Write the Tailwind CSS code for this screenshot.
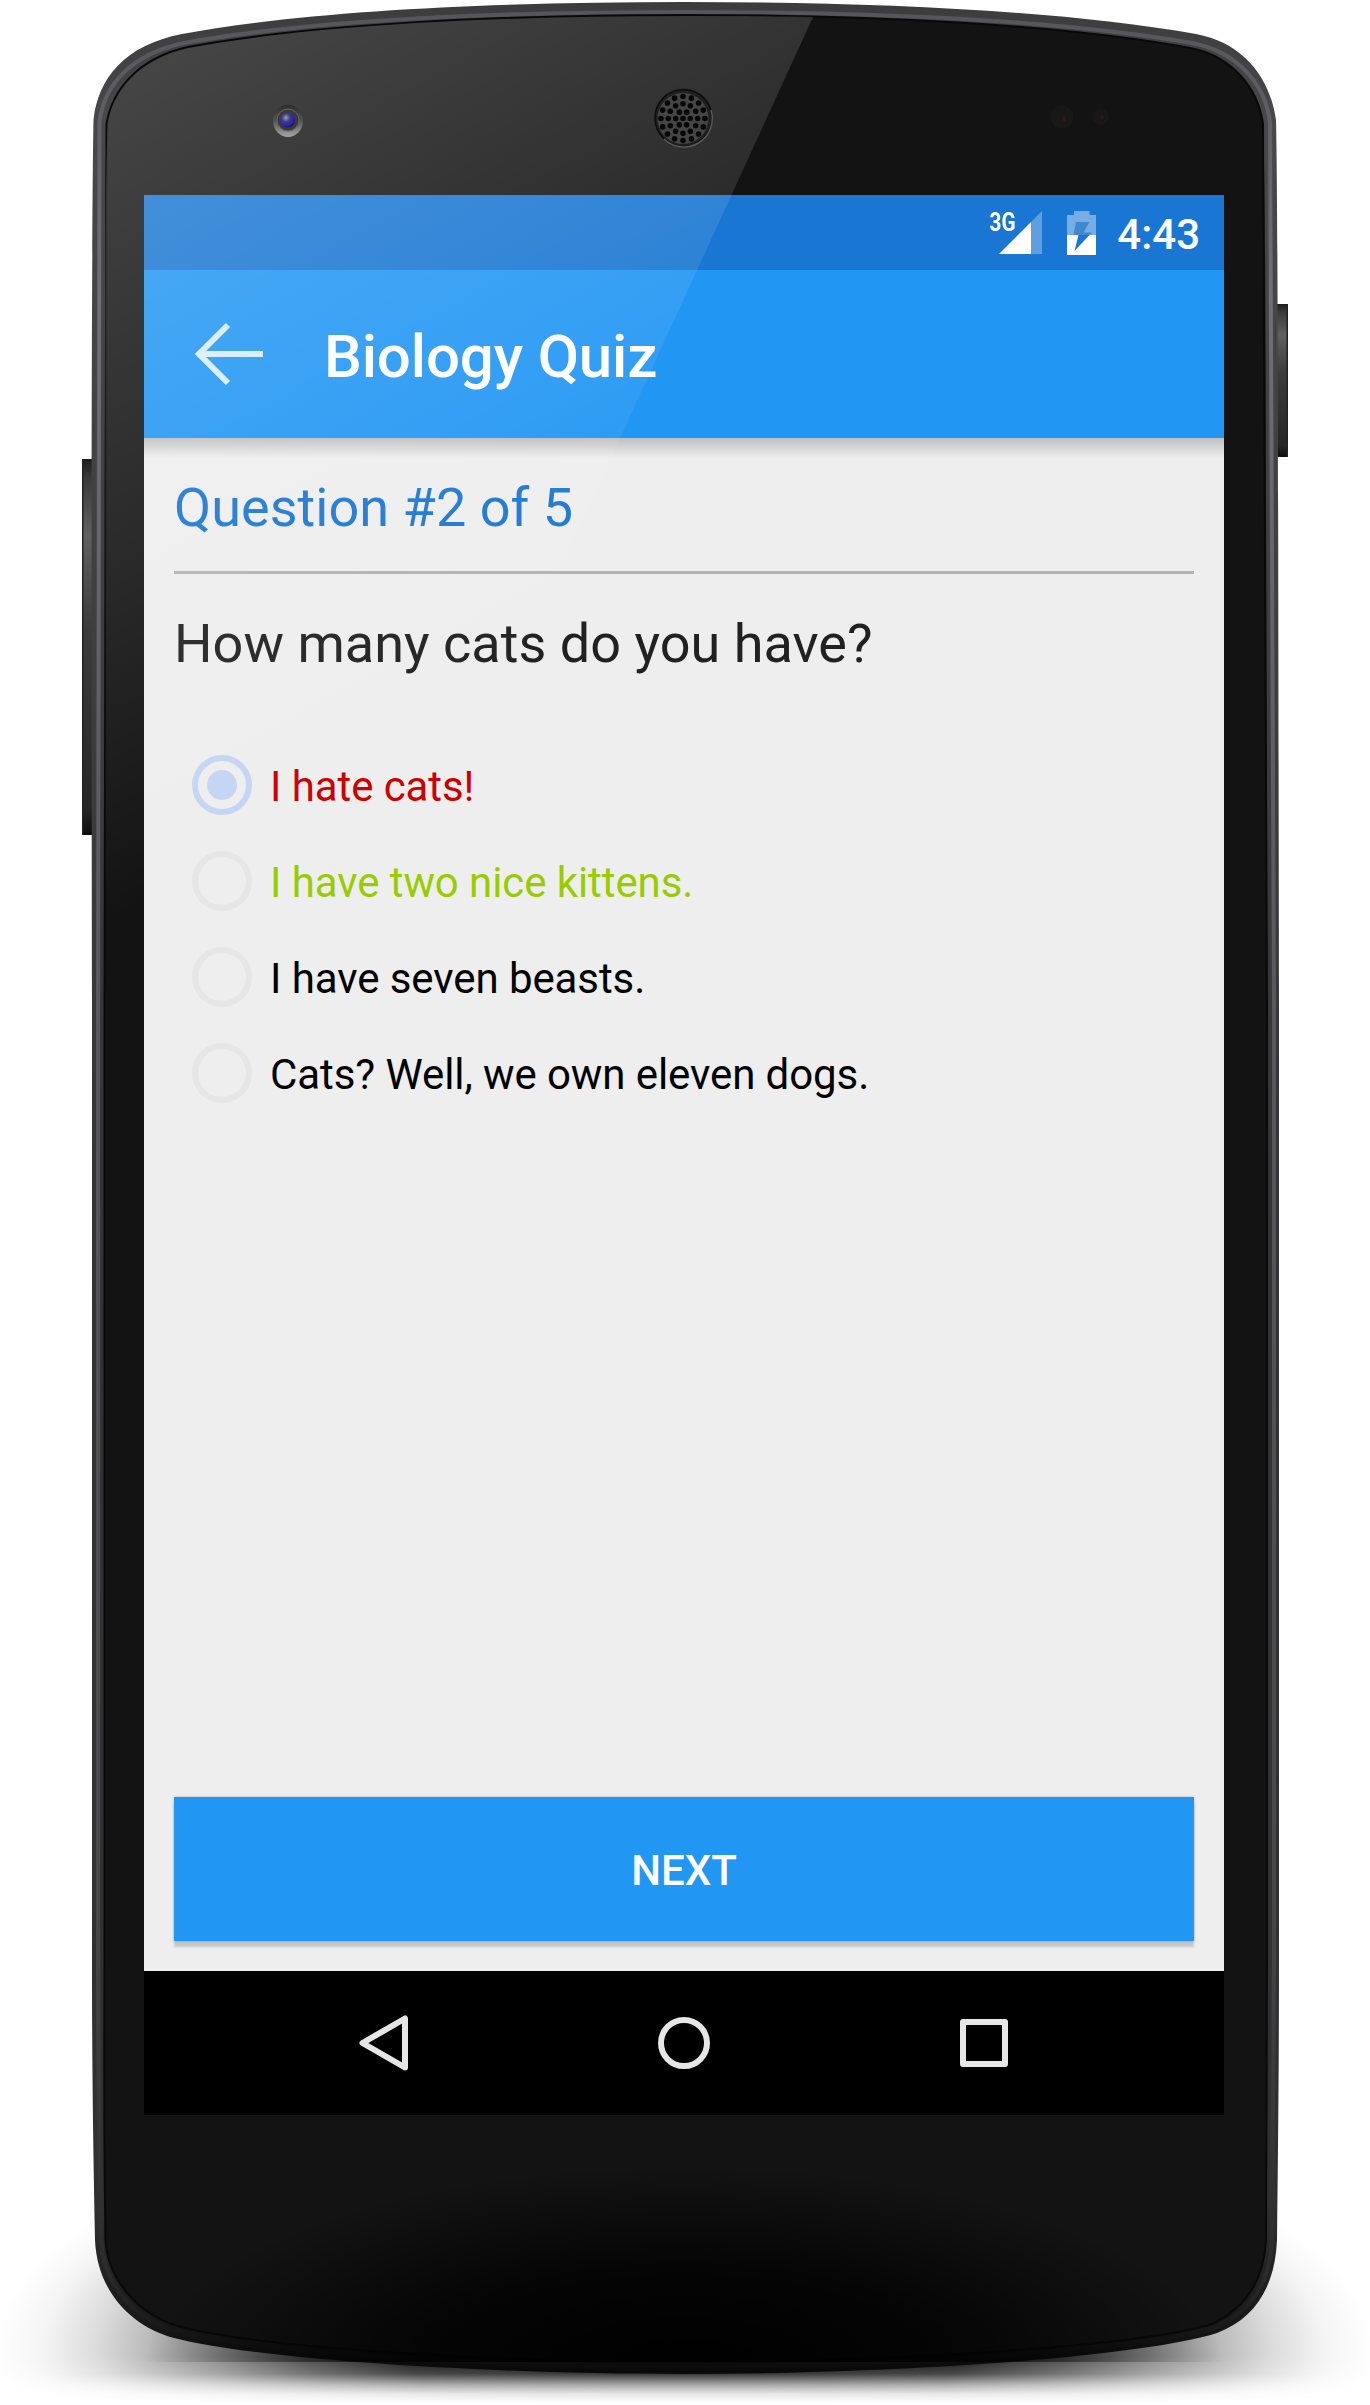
<!DOCTYPE html>
<html lang="en">
<head>
<meta charset="utf-8">
<title>Biology Quiz</title>
<script src="https://cdn.jsdelivr.net/npm/@tailwindcss/browser@4"></script>
</head>
<body class="bg-white">
<div class="relative w-[1370px] h-[2405px] overflow-hidden font-['Roboto',sans-serif] pt-[195px] pl-36">

  <!-- Phone body -->
  <svg class="absolute inset-0" width="1370" height="2405" viewBox="0 0 1370 2405">
    <defs>
      <radialGradient id="floor" gradientUnits="userSpaceOnUse" cx="0" cy="0" r="1" gradientTransform="translate(684 2350) scale(690 250)">
        <stop offset="0" stop-color="#000"/>
        <stop offset=".4" stop-color="#000" stop-opacity=".9"/>
        <stop offset=".55" stop-color="#000" stop-opacity=".68"/>
        <stop offset=".7" stop-color="#000" stop-opacity=".4"/>
        <stop offset=".85" stop-color="#000" stop-opacity=".14"/>
        <stop offset=".93" stop-color="#000" stop-opacity=".04"/>
        <stop offset="1" stop-color="#000" stop-opacity="0"/>
      </radialGradient>
      <linearGradient id="fade" gradientUnits="userSpaceOnUse" x1="0" y1="2358" x2="0" y2="2403">
        <stop offset="0" stop-color="#fff"/>
        <stop offset=".35" stop-color="#fff" stop-opacity=".8"/>
        <stop offset=".6" stop-color="#fff" stop-opacity=".35"/>
        <stop offset=".8" stop-color="#fff" stop-opacity=".1"/>
        <stop offset="1" stop-color="#fff" stop-opacity="0"/>
      </linearGradient>
      <mask id="floorMask"><rect width="1370" height="2405" fill="url(#fade)"/></mask>
      <linearGradient id="frame" x1="0" y1="0" x2="0" y2="1">
        <stop offset="0" stop-color="#3c3c3d"/>
        <stop offset=".05" stop-color="#48484a"/>
        <stop offset=".5" stop-color="#343436"/>
        <stop offset=".93" stop-color="#303031"/>
        <stop offset=".985" stop-color="#141414"/>
        <stop offset="1" stop-color="#080808"/>
      </linearGradient>
      <linearGradient id="shine" x1="0" y1="0" x2="0" y2="1">
        <stop offset="0" stop-color="#56565a"/>
        <stop offset=".12" stop-color="#707074"/>
        <stop offset=".35" stop-color="#5c5c60"/>
        <stop offset=".8" stop-color="#48484a"/>
        <stop offset=".96" stop-color="#2c2c2c"/>
        <stop offset="1" stop-color="#0c0c0c"/>
      </linearGradient>
      <radialGradient id="chin" gradientUnits="userSpaceOnUse" cx="0" cy="0" r="1" gradientTransform="translate(684 2370) scale(540 205)">
        <stop offset="0" stop-color="#000"/>
        <stop offset=".5" stop-color="#000" stop-opacity=".75"/>
        <stop offset="1" stop-color="#000" stop-opacity="0"/>
      </radialGradient>
      <linearGradient id="key" x1="0" y1="0" x2="0" y2="1">
        <stop offset="0" stop-color="#1c1c1c"/>
        <stop offset=".05" stop-color="#3a3a3a"/>
        <stop offset=".2" stop-color="#606060"/>
        <stop offset=".45" stop-color="#3c3c3c"/>
        <stop offset=".93" stop-color="#262626"/>
        <stop offset="1" stop-color="#0c0c0c"/>
      </linearGradient>
      <radialGradient id="lens" cx=".4" cy=".35" r=".7">
        <stop offset="0" stop-color="#98a0b8"/>
        <stop offset=".4" stop-color="#3c3c80"/>
        <stop offset=".75" stop-color="#2a22b8"/>
        <stop offset="1" stop-color="#15152c"/>
      </radialGradient>
      <linearGradient id="ring" x1="0" y1="0" x2="0" y2="1">
        <stop offset="0" stop-color="#2c2c2c"/>
        <stop offset=".5" stop-color="#555"/>
        <stop offset="1" stop-color="#a8a6a2"/>
      </linearGradient>
    </defs>

    <rect width="1370" height="2405" fill="url(#floor)" mask="url(#floorMask)"/>

    <rect x="82" y="459" width="14" height="376" fill="url(#key)"/>
    <rect x="82" y="459" width="1.5" height="376" fill="#222"/>
    <rect x="1274" y="304" width="14" height="153" fill="url(#key)"/>
    <rect x="1286.5" y="304" width="1.5" height="153" fill="#222"/>

    <path fill="url(#frame)" d="M684 2C870 2 1060 10 1196 34C1244 43 1270 78 1276 120C1278 200 1278 480 1279 1000V1960C1279 2060 1278 2160 1277 2240C1275 2288 1254 2319 1217 2333C1140 2357 900 2374 684 2374C470 2374 250 2358 174 2338C130 2326 97 2290 95 2240C93 2140 92 2060 92 1960V1000C91 480 92 200 93.500 120C98 78 125 45 182 34C310 10 500 2 684 2Z"/>
    <path fill="none" stroke="url(#shine)" stroke-width="4" d="M684 12C870 12 1060 20 1192 43C1238 52 1265 84 1270 122C1273 200 1273 480 1274 1000V1960C1274 2060 1273 2160 1272 2240C1270 2284 1250 2313 1214 2328C1140 2350 900 2367 684 2367C470 2367 250 2351 176 2331C135 2320 103 2284 101 2240C99 2140 98 2060 98 1960V1000C97 480 98 200 99.500 122C104 84 132 54 184 43C310 20 500 12 684 12Z"/>
    <path fill="#131313" stroke="#090909" stroke-width="2" d="M684 15C870 15 1060 24 1190 48C1232 56 1258 88 1263 124C1266 200 1266 480 1267 1000V1960C1267 2060 1267 2160 1266 2240C1264 2280 1246 2308 1212 2324C1140 2346 900 2362 684 2362C470 2362 250 2346 178 2326C138 2314 108 2280 105.500 2240C104 2140 104 2060 104.500 1960V1000C105 480 105 200 106.500 124C112 90 138 58 188 47C310 24 500 15 684 15Z"/>
    <rect x="144" y="2115" width="1080" height="247" fill="url(#chin)"/>
  </svg>

  <!-- Screen -->
  <main class="relative flex flex-col w-[1080px] h-[1920px] bg-[#eeeeee]">
    <div class="flex items-center justify-end h-[75px] bg-[#1976d2] pr-6 text-white">
      <span class="-mr-[9px] -mt-[22px] origin-right scale-x-[0.8] text-[26px] leading-none font-bold">3G</span>
      <svg class="-ml-[7px]" width="44" height="45" viewBox="0 0 44 45">
        <path d="M43 1V44H32V12Z" fill="#5f9fe0"/>
        <path d="M0 44L32 12V44Z" fill="#fff"/>
      </svg>
      <svg class="ml-6" width="29" height="44" viewBox="0 0 29 44">
        <path d="M7 0H22.500V4H29V24H0V4H7Z" fill="#75ade4"/>
        <path d="M0 24H29V44H0Z" fill="#fff"/>
        <path d="M9 11H22.500L16.500 21.500H25L22.500 24H6.500Z" fill="#4187d0"/>
        <path d="M11.500 24H22.500L7.500 40Z" fill="#1976d2"/>
      </svg>
      <span class="ml-[21px] pt-1 text-[42px] leading-[49px] font-medium">4:43</span>
    </div>

    <header class="relative flex items-center h-[168px] shrink-0 bg-[#2196f3] pl-[51px]">
      <svg width="69" height="64" viewBox="0 0 69 64" fill="none" stroke="#fff" stroke-opacity=".82" stroke-width="6">
        <path d="M68 32H8M33 3L4 32L33 61"/>
      </svg>
      <h1 class="ml-[60px] pt-[5px] text-[60px] leading-[70px] font-medium tracking-[-0.15px] text-white">Biology Quiz</h1>
      <div class="absolute inset-x-0 top-full h-[20px] bg-linear-to-b from-black/20 via-black/10 to-transparent"></div>
    </header>

    <section class="flex flex-col grow px-[30px] pt-[38px] pb-[30px]">
      <h2 class="text-[54px] leading-[63px] tracking-[0.04px] text-[#1976d2]">Question #2 of 5</h2>
      <hr class="mt-8 border-0 h-[3px] bg-[#b2b2b2]">
      <p class="mt-[38px] text-[54px] leading-[63px] tracking-[0.03px] text-[#212121]">How many cats do you have?</p>

      <ul class="mt-[62px] pl-[18px] text-[42px] leading-[50px] tracking-[-0.08px]">
        <li class="flex items-center h-24 text-[#cc0000]">
          <span class="flex items-center justify-center size-[60px] rounded-full border-[6px] border-[#c4d5f4]"><span class="size-[30px] rounded-full bg-[#c4d5f4]"></span></span>
          <span class="ml-[18px] pt-[3px]">I hate cats!</span>
        </li>
        <li class="flex items-center h-24 text-[#99cc00]">
          <span class="size-[60px] rounded-full border-[6px] border-[#e6e6e6]"></span>
          <span class="ml-[18px] pt-[3px]">I have two nice kittens.</span>
        </li>
        <li class="flex items-center h-24 text-black">
          <span class="size-[60px] rounded-full border-[6px] border-[#e6e6e6]"></span>
          <span class="ml-[18px] pt-[3px]">I have seven beasts.</span>
        </li>
        <li class="flex items-center h-24 text-black">
          <span class="size-[60px] rounded-full border-[6px] border-[#e6e6e6]"></span>
          <span class="ml-[18px] pt-[3px]">Cats? Well, we own eleven dogs.</span>
        </li>
      </ul>

      <button class="mt-auto h-36 bg-[#2196f3] pt-[3px] text-[42px] font-medium text-white shadow-[0_6px_2px_rgba(0,0,0,0.16),0_0_3px_rgba(0,0,0,0.2)]">NEXT</button>
    </section>

    <nav class="flex items-center h-36 bg-black">
      <svg class="ml-[213px]" width="54" height="58" viewBox="0 0 54 58" fill="none" stroke="#e6e6e6" stroke-width="6" stroke-linejoin="round"><path d="M48 4.500V53.500L5.500 29Z"/></svg>
      <svg class="ml-[247px]" width="52" height="52" viewBox="0 0 52 52" fill="none" stroke="#e6e6e6" stroke-width="6"><circle cx="26" cy="26" r="23"/></svg>
      <svg class="ml-[250px]" width="48" height="48" viewBox="0 0 48 48" fill="none" stroke="#e6e6e6" stroke-width="6" stroke-linejoin="round"><rect x="3" y="3" width="42" height="42"/></svg>
    </nav>
  </main>

  <!-- Glass reflection, camera, earpiece and sensors -->
  <svg class="absolute inset-0 pointer-events-none" width="1370" height="2405" viewBox="0 0 1370 2405">
    <defs>
      <linearGradient id="glare" gradientUnits="userSpaceOnUse" x1="100" y1="100" x2="450" y2="740">
        <stop offset="0" stop-color="#fff" stop-opacity=".21"/>
        <stop offset=".6" stop-color="#fff" stop-opacity=".09"/>
        <stop offset="1" stop-color="#fff" stop-opacity="0"/>
      </linearGradient>
    </defs>
    <path fill="url(#glare)" d="M684 16C740 16 770 16 813 17L380 962H105.500V480C105.500 320 105 200 107.500 124C113 90 139 59 188 48C310 25 500 16 684 16Z"/>

    <ellipse cx="288" cy="121" rx="15" ry="16" fill="url(#ring)"/>
    <circle cx="288" cy="120" r="11" fill="#3a3a3a" stroke="#666" stroke-width="1"/>
    <circle cx="287.500" cy="120" r="7.500" fill="url(#lens)"/>

    <circle cx="683.500" cy="118" r="28.500" fill="#202020" stroke="#0c0c0c" stroke-width="1.500"/>
    <path d="M664 139A28.500 28.500 0 0 0 711 110" fill="none" stroke="#5a5a5a" stroke-width="1.500"/>
    <circle cx="683" cy="118.500" r="25.500" fill="#454545"/>
    <g fill="none" stroke="#070707" stroke-width="5.600" stroke-linecap="round">
      <circle cx="683" cy="118.500" r="7.300" pathLength="6" stroke-dasharray="0 1"/>
      <circle cx="683" cy="118.500" r="14.700" pathLength="12" stroke-dasharray="0 1"/>
      <circle cx="683" cy="118.500" r="22" pathLength="16" stroke-dasharray="0 1"/>
    </g>
    <circle cx="683" cy="118.500" r="2.800" fill="#070707"/>

    <circle cx="1062" cy="117" r="11.500" fill="#181818"/>
    <ellipse cx="1064" cy="119" rx="1.500" ry="3" fill="#2c1a14"/>
    <circle cx="1101" cy="117" r="8" fill="#181818"/>
    <ellipse cx="1102" cy="117" rx="1.200" ry="2.500" fill="#2c1a14"/>
  </svg>
</div>
</body>
</html>
